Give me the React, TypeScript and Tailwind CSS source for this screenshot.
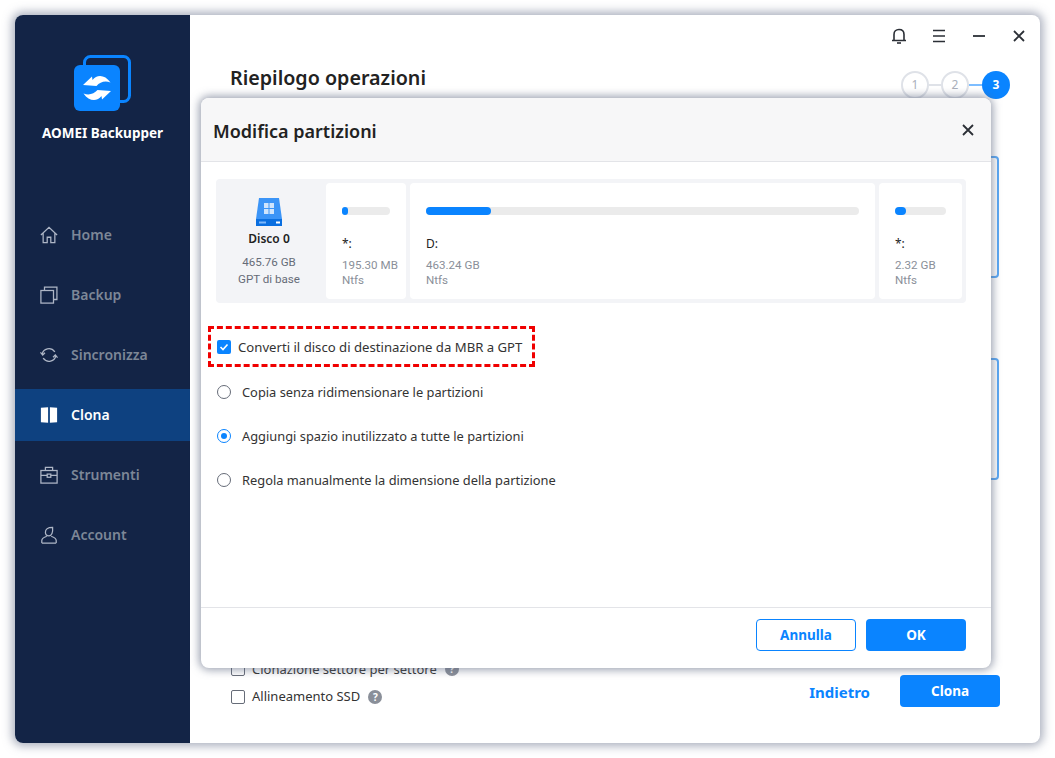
import React from "react";

function Logo() {
  return (
    <svg width="58" height="58" viewBox="0 0 58 58" fill="none">
      <rect x="10.5" y="1.5" width="45" height="45" rx="6" stroke="#0a84ff" strokeWidth="3" />
      <rect x="0" y="10" width="46" height="46" rx="6" fill="#0a84ff" />
      <path d="M9 30 L18 21.5 L18.5 25 C23 19 31 19.5 36.5 27.5 C31 25.5 26 27 22.5 31 Z" fill="#fff" />
      <path d="M9 30 L18 21.5 L18.5 25 C23 19 31 19.5 36.5 27.5 C31 25.5 26 27 22.5 31 Z" fill="#fff" transform="rotate(180 23 33)" />
    </svg>
  );
}

function NavIcon({ name }: { name: string }) {
  const common = { width: 18, height: 18, viewBox: "0 0 20 20", fill: "none", stroke: "#aeb6c6", strokeWidth: 1.4 };
  if (name === "home") {
    return (
      <svg {...common}>
        <path d="M1 10 L10 1.5 L19 10 M3.5 8 V18.5 H8 V12.5 H12 V18.5 H16.5 V8" />
      </svg>
    );
  }
  if (name === "backup") {
    return (
      <svg {...common}>
        <rect x="1" y="5" width="14" height="14" />
        <path d="M5 5 V1.2 H18.8 V15 H15" />
      </svg>
    );
  }
  if (name === "sync") {
    return (
      <svg {...common}>
        <path d="M2.5 9 C3.5 3 12 0.5 16.5 6.5 M17.5 11 C16.5 17 8 19.5 3.5 13.5" />
        <path d="M0.5 7 L3 10 L5.5 7.5 M14.5 12.5 L17 10 L19.5 13" />
      </svg>
    );
  }
  if (name === "clone") {
    return (
      <svg width="18" height="18" viewBox="0 0 20 20" fill="#fff">
        <path d="M1 2 L9 1.5 V18.5 L1 18 Z M11 1.5 L19 2 V18 L11 18.5 Z" />
      </svg>
    );
  }
  if (name === "tools") {
    return (
      <svg {...common}>
        <rect x="1" y="5" width="18" height="14" />
        <path d="M6 5 V1.5 H14 V5 M1 10.5 H8 M12 10.5 H19" />
        <rect x="8" y="9" width="4" height="3.5" />
      </svg>
    );
  }
  return (
    <svg {...common}>
      <path d="M6 7 C6 3.5 8 1.5 14 1.5 C14.5 7 13 11 10 11 C7.5 11 6 9.5 6 7 Z" />
      <path d="M2 19 V16 C2 13.5 5 12.5 7.5 11.5 M18 19 V16 C18 13.5 15 12.5 12.5 11.5 M2 19 H18" />
    </svg>
  );
}

function NavItem({ icon, label, active }: { icon: string; label: string; active?: boolean }) {
  return (
    <div className={active ? "h-[52px] flex items-center pl-[25px] bg-[#0e4180]" : "h-[60px] flex items-center pl-[25px]"}>
      <NavIcon name={icon} />
      <span className={active ? "ml-[13px] mb-[2px] text-[14px] font-semibold text-white" : "ml-[13px] mb-[2px] text-[14px] font-semibold text-[#7d8797]"}>
        {label}
      </span>
    </div>
  );
}

function Step({ n, on }: { n: number; on?: boolean }) {
  return (
    <div
      className={
        on
          ? "w-7 h-7 rounded-full bg-[#0a84ff] text-white text-[12px] font-bold flex items-center justify-center"
          : "w-7 h-7 rounded-full border-2 border-[#dfe2e8] bg-white text-[#a9afba] text-[12px] flex items-center justify-center"
      }
    >
      {n}
    </div>
  );
}

function PartCard({ width, barW, bar, letter, size }: { width: string; barW: string; bar: number; letter: string; size: string }) {
  return (
    <div className={`${width} h-[116px] bg-white rounded-[4px] pt-6 px-4`}>
      <div className={`${barW} h-[8px] rounded-full bg-[#ebebeb]`}>
        <div className="h-[8px] rounded-full bg-[#0a84ff]" style={{ width: bar }} />
      </div>
      <div className="mt-[21px] text-[12px] leading-4 text-[#222]">{letter}</div>
      <div className="mt-[6px] whitespace-nowrap font-['Roboto',sans-serif] text-[11.6px] leading-[15px] text-[#8a8f99]">{size}</div>
      <div className="font-['Roboto',sans-serif] text-[11.6px] leading-[15px] text-[#8a8f99]">Ntfs</div>
    </div>
  );
}

function Radio({ label, on }: { label: string; on?: boolean }) {
  return (
    <div className="h-[44px] flex items-center pl-[16px]">
      {on ? (
        <div className="w-[14px] h-[14px] rounded-full border-[1.5px] border-[#0a84ff] flex items-center justify-center">
          <div className="w-[6px] h-[6px] rounded-full bg-[#0a84ff]" />
        </div>
      ) : (
        <div className="w-[14px] h-[14px] rounded-full border-[1.5px] border-[#666c78]" />
      )}
      <span className="ml-[11px] mt-[2px] text-[12.85px] text-[#333]">{label}</span>
    </div>
  );
}

export default function App() {
  return (
    <div className="w-[1055px] h-[758px] bg-white p-[15px] font-['Noto_Sans','Open_Sans',sans-serif]">
      <div className="relative w-[1025px] h-[728px] flex rounded-[8px] bg-white shadow-[0_0_10px_3px_rgba(100,110,135,0.55)]">
        {/* sidebar */}
        <div className="w-[175px] shrink-0 rounded-l-[8px] bg-[#132446]">
          <div className="flex flex-col items-center pt-10">
            <Logo />
            <div className="mt-[10px] text-[13.5px] font-bold text-white">AOMEI Backupper</div>
          </div>
          <div className="mt-[62px]">
            <NavItem icon="home" label="Home" />
            <NavItem icon="backup" label="Backup" />
            <NavItem icon="sync" label="Sincronizza" />
            <div className="h-[4px]" />
            <NavItem icon="clone" label="Clona" active />
            <div className="h-[4px]" />
            <NavItem icon="tools" label="Strumenti" />
            <NavItem icon="account" label="Account" />
          </div>
        </div>

        {/* main */}
        <div className="flex-1 flex flex-col relative">
          <div className="h-[40px] flex items-center justify-end pr-[14px] gap-[26px] pt-[2px]">
            <svg className="-mr-px" width="16" height="16" viewBox="0 0 16 16" fill="none" stroke="#2b2f36" strokeWidth="1.6">
              <path d="M1 12.5 H15 M3 12.5 V6.5 C3 3.5 5 1.5 8 1.5 C11 1.5 13 3.5 13 6.5 V12.5" />
              <path d="M6 15 H10" />
            </svg>
            <svg width="14" height="14" viewBox="0 0 14 14" stroke="#2b2f36" strokeWidth="1.6">
              <path d="M1 1.5 H13 M1 7 H13 M1 12.5 H13" />
            </svg>
            <svg width="14" height="14" viewBox="0 0 14 14" stroke="#2b2f36" strokeWidth="1.8">
              <path d="M1 7 H13" />
            </svg>
            <svg width="14" height="14" viewBox="0 0 14 14" stroke="#2b2f36" strokeWidth="1.8">
              <path d="M2 2 L12 12 M12 2 L2 12" />
            </svg>
          </div>

          <div className="flex items-start justify-between pl-10 pr-[30px]">
            <div className="text-[19.7px] font-semibold text-[#222] leading-[46px]">Riepilogo operazioni</div>
            <div className="flex items-center mt-[16px]">
              <Step n={1} />
              <div className="w-[12px] h-[2px] bg-[#dfe2e8]" />
              <Step n={2} />
              <div className="w-[13px] h-[2px] bg-[#7dbdff]" />
              <Step n={3} on />
            </div>
          </div>

          <div className="ml-auto mr-[41px] mt-[55px] w-[300px] h-[122px] rounded-[4px] border-2 border-[#5aa8f5]" />
          <div className="ml-auto mr-[41px] mt-[80px] w-[300px] h-[122px] rounded-[4px] border-2 border-[#5aa8f5]" />

          <div className="mt-[175px] pl-[41px] pr-10 flex items-start justify-between">
            <div>
              <div className="flex items-center h-[28px] text-[13px] text-[#333]">
                <div className="w-[14px] h-[14px] rounded-[2px] border-[1.5px] border-[#666c78]" />
                <span className="ml-[7px] pt-[2px]">Clonazione settore per settore</span>
                <div className="ml-2 w-[14px] h-[14px] rounded-full bg-[#8a8f99] text-white text-[10px] font-bold flex items-center justify-center">?</div>
              </div>
              <div className="flex items-center h-[28px] text-[13px] text-[#333]">
                <div className="w-[14px] h-[14px] rounded-[2px] border-[1.5px] border-[#666c78]" />
                <span className="ml-[7px]">Allineamento SSD</span>
                <div className="ml-2 w-[14px] h-[14px] rounded-full bg-[#8a8f99] text-white text-[10px] font-bold flex items-center justify-center">?</div>
              </div>
            </div>
            <div className="flex items-center mt-[20px]">
              <span className="pt-[2px] text-[15px] font-bold text-[#0a84ff]">Indietro</span>
              <div className="ml-[30px] w-[100px] h-[32px] pt-[1px] rounded-[4px] bg-[#0a84ff] text-white text-[13.5px] font-bold flex items-center justify-center">Clona</div>
            </div>
          </div>
        </div>

        {/* dialog */}
        <div className="absolute left-[186px] top-[83px] w-[790px] h-[570px] rounded-[8px] bg-white flex flex-col shadow-[0_0_9px_2px_rgba(90,100,125,0.6)]">
          <div className="h-[64px] shrink-0 rounded-t-[8px] bg-[#f7f7f8] border-b border-[#e3e4e8] flex items-center justify-between pl-3 pr-4">
            <span className="mt-[4px] text-[18px] font-semibold text-[#222]">Modifica partizioni</span>
            <svg width="14" height="14" viewBox="0 0 14 14" stroke="#2b2f36" strokeWidth="1.8">
              <path d="M2 2 L12 12 M12 2 L2 12" />
            </svg>
          </div>

          <div className="flex-1 px-[15px] pt-[17px]">
            <div className="w-[750px] h-[124px] rounded-[4px] bg-[#f3f4f7] flex items-center gap-1 pr-1">
              <div className="w-[106px] shrink-0 flex flex-col items-center">
                <svg className="mt-[2px]" width="30" height="30" viewBox="0 0 30 30">
                  <path d="M5 1 H25 L28 22 H2 Z" fill="#3b94f7" />
                  <rect x="2" y="22" width="26" height="7" fill="#0a6fe0" />
                  <rect x="10" y="6" width="4.5" height="5" fill="#cfe4fc" />
                  <rect x="15.5" y="6" width="4.5" height="5" fill="#cfe4fc" />
                  <rect x="10" y="12" width="4.5" height="5" fill="#cfe4fc" />
                  <rect x="15.5" y="12" width="4.5" height="5" fill="#cfe4fc" />
                  <rect x="22" y="24.5" width="4" height="2" fill="#fff" />
                  <rect x="5" y="24.5" width="7" height="2" fill="#7db8fb" />
                </svg>
                <div className="mt-[3px] text-[12px] font-semibold text-[#222]">Disco 0</div>
                <div className="mt-[6px] font-['Roboto',sans-serif] text-[11.6px] leading-[17px] text-[#666c78]">465.76 GB</div>
                <div className="font-['Roboto',sans-serif] text-[11.6px] leading-[17px] text-[#666c78]">GPT di base</div>
              </div>
              <PartCard width="w-[80px]" barW="w-[48px]" bar={6} letter="*:" size="195.30 MB" />
              <PartCard width="w-[465px]" barW="w-[433px]" bar={65} letter="D:" size="463.24 GB" />
              <PartCard width="w-[83px]" barW="w-[51px]" bar={11} letter="*:" size="2.32 GB" />
            </div>

            <div className="mt-[23px] -ml-2 w-[327px] h-[41px] border-[3px] border-dashed border-[#f00000] flex items-center pl-[6px]">
              <div className="w-[14px] h-[14px] rounded-[2px] bg-[#0a84ff] flex items-center justify-center">
                <svg width="10" height="10" viewBox="0 0 10 10" fill="none" stroke="#fff" strokeWidth="1.6">
                  <path d="M1.5 5 L4 7.5 L8.5 2.5" />
                </svg>
              </div>
              <span className="ml-[7px] mt-[3px] text-[13.15px] text-[#333]">Converti il disco di destinazione da MBR a GPT</span>
            </div>
            <div className="mt-[3px] -ml-[15px]">
              <Radio label="Copia senza ridimensionare le partizioni" />
              <Radio label="Aggiungi spazio inutilizzato a tutte le partizioni" on />
              <Radio label="Regola manualmente la dimensione della partizione" />
            </div>
          </div>

          <div className="h-[61px] shrink-0 border-t border-[#e3e4e8] flex items-start justify-end gap-[10px] pr-[25px] pt-[11px]">
            <div className="w-[100px] h-[32px] pt-[1px] rounded-[4px] border border-[#0a84ff] text-[#0a84ff] text-[13.5px] font-bold flex items-center justify-center">Annulla</div>
            <div className="w-[100px] h-[32px] pt-[1px] rounded-[4px] bg-[#0a84ff] text-white text-[13.5px] font-bold flex items-center justify-center">OK</div>
          </div>
        </div>
      </div>
    </div>
  );
}
